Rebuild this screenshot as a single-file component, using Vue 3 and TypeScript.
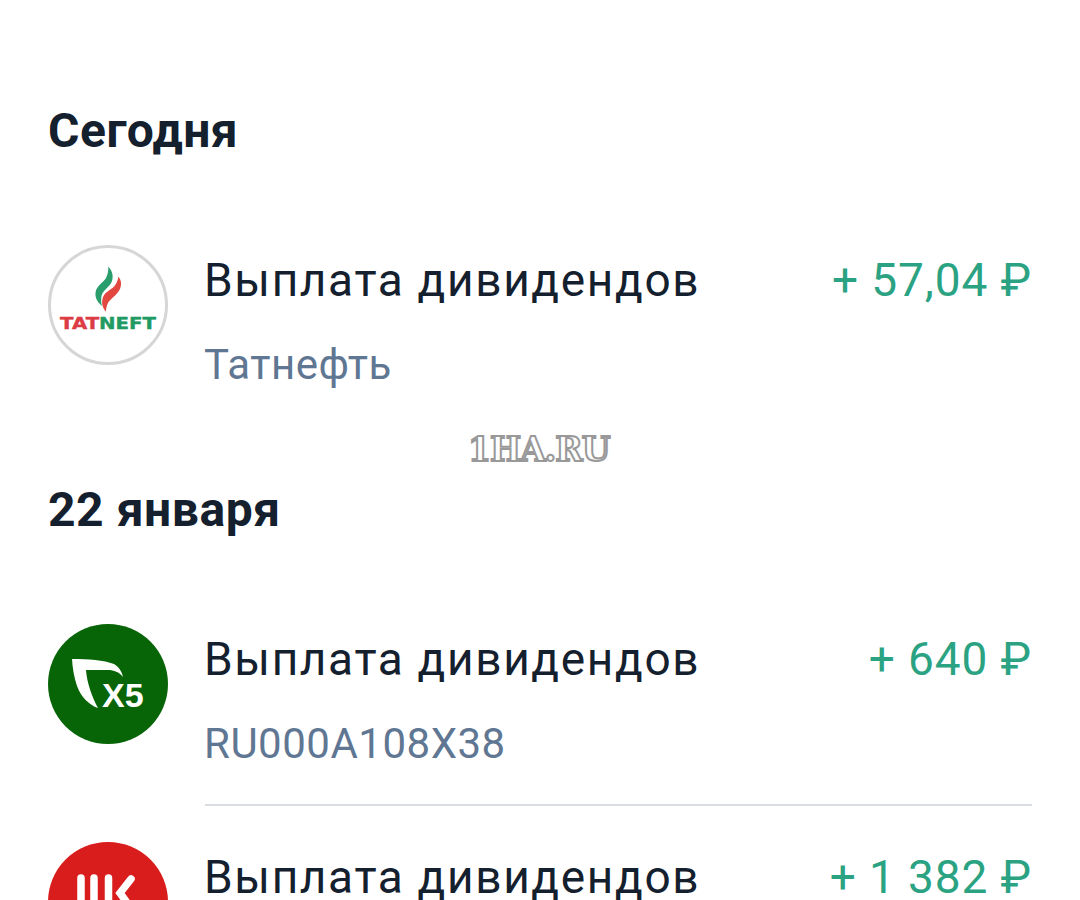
<script setup lang="ts">
interface Operation {
  title: string;
  sub: string;
  amount: string;
  logo: string;
}
interface Group {
  date: string;
  items: Operation[];
}

const groups: Group[] = [
  {
    date: "Сегодня",
    items: [{ title: "Выплата дивидендов", sub: "Татнефть", amount: "+ 57,04 ₽", logo: "tatneft" }],
  },
  {
    date: "22 января",
    items: [
      { title: "Выплата дивидендов", sub: "RU000A108X38", amount: "+ 640 ₽", logo: "x5" },
      { title: "Выплата дивидендов", sub: "ПИК", amount: "+ 1 382 ₽", logo: "pik" },
    ],
  },
];
</script>

<template>
  <div class="page">
    <section v-for="group in groups" :key="group.date" class="group">
      <h2 class="date">{{ group.date }}</h2>
      <div v-for="item in group.items" :key="item.sub" class="row">
        <div class="logo" :class="'logo-' + item.logo">
          <svg v-if="item.logo === 'tatneft'" viewBox="0 0 120 120" width="120" height="120">
            <path d="M60.3 21.7C65 26 66 33 63 38.3 60 43 54.5 46 53.5 51 53 55 53 58 54 61 49.5 57 47 53 47.5 48 48 41 55 38 58 33 59.5 30 60.5 26 60.3 21.7z" fill="#2a9d6d" />
            <path d="M70.3 31.7C73.5 35 74 40 71.5 45 68 51 62 54 60 58 58.5 61 58 64 58 66.7 54.5 63 53.5 59 54.5 54 56 47 63 45 66.5 41 68.5 38.5 70 35 70.3 31.7z" fill="#e2483f" />
            <text x="12" y="84" class="tat-text" textLength="96" lengthAdjust="spacingAndGlyphs"><tspan fill="#dc3c44" stroke="#dc3c44">TAT</tspan><tspan fill="#1f9a63" stroke="#1f9a63">NEFT</tspan></text>
          </svg>
          <svg v-else-if="item.logo === 'x5'" viewBox="0 0 120 120" width="120" height="120">
            <path d="M24 35C40 35 56 36 66 40 71 43 74 48 75 53 71 48 66 46 60 46L38 46C39 59 44 73 50 84 41 81 33 73 29 62 26 53 24.500 44 24 35z" fill="#fff" />
            <text x="54" y="83" class="x5-text">X5</text>
          </svg>
          <svg v-else viewBox="0 0 120 120" width="120" height="120">
            <path d="M33 36V100M46 36V100M60.5 36V100M83 37L72 51L85 69" fill="none" stroke="#fff" stroke-width="7.5" stroke-linecap="round" />
          </svg>
        </div>
        <div class="body" :class="{ 'with-border': item.logo === 'x5' }">
          <div class="line">
            <span class="title">{{ item.title }}</span>
            <span class="amount">{{ item.amount }}</span>
          </div>
          <div class="sub">{{ item.sub }}</div>
        </div>
      </div>
    </section>
    <div class="watermark">1HA.RU</div>
  </div>
</template>

<style>
html,
body {
  background: #fff;
  overflow: hidden;
}
</style>

<style scoped>
.page {
  position: relative;
  width: 1080px;
  height: 900px;
  overflow: hidden;
  box-sizing: border-box;
  padding: 100px 48px 0;
  font-family: Roboto, "Noto Sans", sans-serif;
  background: #fff;
}
.group {
  display: flex;
  flex-direction: column;
}
.group + .group {
  margin-top: 54px;
}
.date {
  margin: 0 0 83px;
  font-size: 48px;
  line-height: 62px;
  letter-spacing: 0.55px;
  font-weight: 700;
  color: #14202e;
}
.row {
  display: flex;
  gap: 37px;
  height: 218px;
}
.group:first-child .row {
  height: auto;
}
.logo {
  flex: none;
  width: 120px;
  height: 120px;
  border-radius: 50%;
  box-sizing: border-box;
  overflow: hidden;
}
.logo svg {
  display: block;
}
.logo-tatneft {
  border: 3px solid #d6d6d6;
  background: #fff;
}
.logo-tatneft svg {
  margin: -3px;
}
.logo-x5 {
  background: #076507;
}
.logo-pik {
  background: #d91c1c;
}
.tat-text {
  font-family: "DejaVu Sans", sans-serif;
  font-size: 16.5px;
  font-weight: 700;
  stroke-width: 0.4;
}
.x5-text {
  font-family: "Liberation Sans", sans-serif;
  font-size: 34px;
  font-weight: 700;
  fill: #fff;
}
.body {
  flex: 1;
  min-width: 0;
  height: 180px;
}
.with-border {
  border-bottom: 2px solid #d9dce0;
}
.line {
  display: flex;
  justify-content: space-between;
  align-items: center;
  height: 70px;
  margin-left: -1px;
}
.title {
  font-size: 46px;
  letter-spacing: 1.65px;
  color: #14202e;
}
.amount {
  font-size: 46px;
  letter-spacing: 0.9px;
  color: #2ba383;
}
.sub {
  margin-top: 25px;
  margin-left: -1px;
  font-size: 42px;
  line-height: 50px;
  letter-spacing: 0.5px;
  color: #5f7792;
}
.watermark {
  position: absolute;
  left: 468px;
  top: 432px;
  font-family: "DejaVu Serif", serif;
  font-weight: 700;
  font-size: 33px;
  line-height: 36px;
  color: #fff;
  -webkit-text-stroke: 2px #999;
  letter-spacing: -1px;
}
</style>
